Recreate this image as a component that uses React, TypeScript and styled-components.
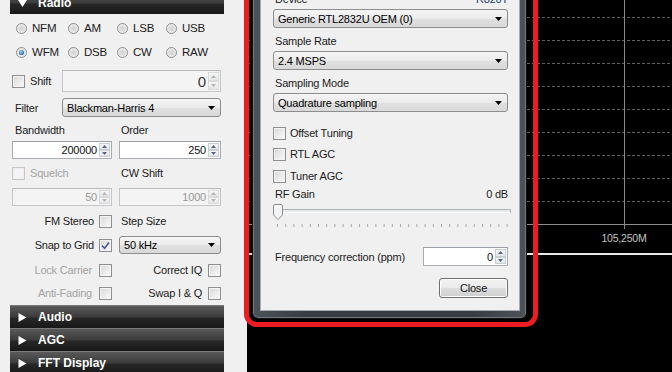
import styled, { createGlobalStyle } from 'styled-components';

const GlobalStyle = createGlobalStyle`
  html, body {
    margin: 0;
    padding: 0;
    background: #000;
    overflow: hidden;
  }
  body {
    font-family: 'Liberation Sans', Arial, sans-serif;
    font-size: 11px;
    letter-spacing: -0.2px;
    color: #1b1b1b;
  }
  * {
    box-sizing: border-box;
  }
`;

// ---------- small win32-ish controls ----------

function CheckBox({ checked, disabled }: { checked?: boolean; disabled?: boolean }) {
  return (
    <CheckBoxBox $disabled={disabled}>
      {checked && (
        <svg width="9" height="9" viewBox="0 0 9 9">
          <path d="M1 4.6 L3.6 7.2 L8 1.4" fill="none" stroke="#4a5d9a" strokeWidth="1.6" />
        </svg>
      )}
    </CheckBoxBox>
  );
}

function Radio({ label, checked }: { label: string; checked?: boolean }) {
  return (
    <RadioOption>
      <RadioCircle $checked={checked} />
      <span>{label}</span>
    </RadioOption>
  );
}

function Arrow({ up, disabled }: { up?: boolean; disabled?: boolean }) {
  return (
    <svg width="5" height="3" viewBox="0 0 5 3">
      <path d={up ? 'M0 3 L2.5 0 L5 3 Z' : 'M0 0 L5 0 L2.5 3 Z'} fill={disabled ? '#b4b4b4' : '#51648c'} />
    </svg>
  );
}

interface NumProps {
  value: string;
  disabled?: boolean;
  dim?: boolean;
  width?: number;
  big?: boolean;
}

function NumInput({ value, disabled, dim, width, big }: NumProps) {
  return (
    <NumBox $disabled={disabled} $w={width}>
      <NumValue $dim={dim} $big={big}>{value}</NumValue>
      <Spinner>
        <SpinButton $disabled={disabled}>
          <Arrow up disabled={disabled} />
        </SpinButton>
        <SpinButton $disabled={disabled}>
          <Arrow disabled={disabled} />
        </SpinButton>
      </Spinner>
    </NumBox>
  );
}

function Combo({ text }: { text: string }) {
  return (
    <ComboBox>
      <span>{text}</span>
      <svg width="7" height="4" viewBox="0 0 7 4">
        <path d="M0 0 H7 L3.5 4 Z" fill="#000" />
      </svg>
    </ComboBox>
  );
}

function Section({ title, open, first }: { title: string; open?: boolean; first?: boolean }) {
  return (
    <SectionBar $first={first}>
      <svg width="9" height="9" viewBox="0 0 9 9">
        <path d={open ? 'M0 1 H9 L4.5 8 Z' : 'M0.5 0 L8.5 4.5 L0.5 9 Z'} fill="#fff" />
      </svg>
      <span>{title}</span>
    </SectionBar>
  );
}

function GainSlider() {
  const ticks = Array.from({ length: 29 }, (_, i) => 4.5 + i * 8.2);
  return (
    <svg width="238" height="28" viewBox="0 0 238 28">
      <rect x="0.5" y="7.5" width="237" height="3" fill="#e7eaea" stroke="#b0b3b6" />
      <line x1="1" x2="237" y1="10.5" y2="10.5" stroke="#fff" />
      <path
        d="M0.5 4 Q0.5 2.5 2 2.5 H8 Q9.5 2.5 9.5 4 V13 L5 17.5 L0.5 13 Z"
        fill="#f3f3f3"
        stroke="#8b8f93"
      />
      <path d="M1.5 4.5 H8.5" stroke="#fff" />
      {ticks.map(x => (
        <line key={x} x1={x} x2={x} y1="22" y2="25" stroke="#a9a9a9" />
      ))}
    </svg>
  );
}

function SpectrumGrid() {
  const rows = Array.from({ length: 9 }, (_, i) => 17.5 + i * 23);
  return (
    <svg width="425" height="372" viewBox="0 0 425 372">
      {rows.map(y => (
        <line key={y} x1="0" x2="425" y1={y} y2={y} stroke="#5e5e5e" strokeDasharray="3 2" />
      ))}
      <line x1="0" x2="425" y1="224.5" y2="224.5" stroke="#8e8e8e" />
      <line x1="377.5" x2="377.5" y1="0" y2="229" stroke="#8a8a8a" />
      <text
        x="377"
        y="242"
        textAnchor="middle"
        fill="#c4c4c4"
        fontSize="10.5"
        fontFamily="'Liberation Sans', Arial, sans-serif"
      >
        105,250M
      </text>
      <line x1="0" x2="425" y1="254" y2="254" stroke="#e8e8e8" strokeWidth="2" />
    </svg>
  );
}

// ---------- page ----------

export default function App() {
  return (
    <>
      <GlobalStyle />
      <Root>
        <LeftPanel>
          <Section title="Radio" open first />
          <Form>
            <RadioGrid>
              <Radio label="NFM" />
              <Radio label="AM" />
              <Radio label="LSB" />
              <Radio label="USB" />
              <Radio label="WFM" checked />
              <Radio label="DSB" />
              <Radio label="CW" />
              <Radio label="RAW" />
            </RadioGrid>

            <WideRow $h={22} $mt={6}>
              <RowLabel>
                <CheckBox />
                <span>Shift</span>
              </RowLabel>
              <NumInput value="0" disabled big />
            </WideRow>

            <WideRow $h={19} $mt={6}>
              <RowLabel $indent={3}>Filter</RowLabel>
              <Combo text="Blackman-Harris 4" />
            </WideRow>

            <PairRow $h={14} $mt={6}>
              <Cell $pl={3}>Bandwidth</Cell>
              <Cell $pl={2}>Order</Cell>
            </PairRow>
            <PairRow $h={18} $mt={4}>
              <NumInput value="200000" />
              <NumInput value="250" />
            </PairRow>

            <PairRow $h={14} $mt={7}>
              <Cell $gap={5}>
                <CheckBox disabled />
                <Muted>Squelch</Muted>
              </Cell>
              <Cell $pl={2}>CW Shift</Cell>
            </PairRow>
            <PairRow $h={18} $mt={8}>
              <NumInput value="50" disabled dim />
              <NumInput value="1000" disabled dim />
            </PairRow>

            <PairRow $h={16} $mt={7}>
              <Cell $right $gap={5}>
                <span>FM Stereo</span>
                <CheckBox />
              </Cell>
              <Cell $pl={2}>Step Size</Cell>
            </PairRow>
            <PairRow $h={18} $mt={7}>
              <Cell $right $gap={5}>
                <span>Snap to Grid</span>
                <CheckBox checked />
              </Cell>
              <Combo text="50 kHz" />
            </PairRow>

            <PairRow $h={16} $mt={8}>
              <Cell $right $gap={7}>
                <Muted>Lock Carrier</Muted>
                <CheckBox />
              </Cell>
              <Cell $right $gap={6}>
                <span>Correct IQ</span>
                <CheckBox />
              </Cell>
            </PairRow>
            <PairRow $h={16} $mt={7}>
              <Cell $right $gap={7}>
                <Muted>Anti-Fading</Muted>
                <CheckBox />
              </Cell>
              <Cell $right $gap={6}>
                <span>Swap I &amp; Q</span>
                <CheckBox />
              </Cell>
            </PairRow>
          </Form>
          <SectionStack>
            <Section title="Audio" />
            <Section title="AGC" />
            <Section title="FFT Display" />
          </SectionStack>
        </LeftPanel>

        <Spectrum>
          <SpectrumGrid />
        </Spectrum>

        <DialogWindow>
          <DialogClient>
            <LabelRow>
              <span>Device</span>
              <TunerName>R820T</TunerName>
            </LabelRow>
            <DialogCombo $mt={3}>
              <Combo text="Generic RTL2832U OEM (0)" />
            </DialogCombo>
            <LabelRow $mt={6}>Sample Rate</LabelRow>
            <DialogCombo $mt={3}>
              <Combo text="2.4 MSPS" />
            </DialogCombo>
            <LabelRow $mt={6}>Sampling Mode</LabelRow>
            <DialogCombo $mt={3}>
              <Combo text="Quadrature sampling" />
            </DialogCombo>

            <CheckRow $mt={14}>
              <CheckBox />
              <span>Offset Tuning</span>
            </CheckRow>
            <CheckRow $mt={7}>
              <CheckBox />
              <span>RTL AGC</span>
            </CheckRow>
            <CheckRow $mt={8}>
              <CheckBox />
              <span>Tuner AGC</span>
            </CheckRow>

            <LabelRow $mt={4}>
              <span>RF Gain</span>
              <span>0 dB</span>
            </LabelRow>
            <SliderWrap>
              <GainSlider />
            </SliderWrap>

            <FreqRow>
              <span>Frequency correction (ppm)</span>
              <NumInput value="0" width={85} />
            </FreqRow>
            <CloseButton>Close</CloseButton>
          </DialogClient>
        </DialogWindow>

        <Highlight />
      </Root>
    </>
  );
}

// ðŸ’… styled-components
const Root = styled.div`
  position: relative;
  display: flex;
  width: 672px;
  height: 372px;
  overflow: hidden;
  background: #000;
`;

const LeftPanel = styled.aside`
  display: flex;
  flex-direction: column;
  flex: 0 0 247px;
  padding: 0 23px 0 10px;
  background: #f0f0f0;
`;

const SectionBar = styled.div<{ $first?: boolean }>`
  display: flex;
  align-items: center;
  gap: 11px;
  flex: 0 0 23px;
  height: 23px;
  margin-top: ${p => (p.$first ? '-9px' : '0')};
  padding-left: 8px;
  border-top: 1px solid #7a7a7a;
  background: linear-gradient(#5a5a5a, #3c3c3c 48%, #272727 56%, #181818);
  color: #fff;
  font-size: 12px;
  font-weight: bold;
  letter-spacing: 0;
`;

const SectionStack = styled.div`
  display: flex;
  flex-direction: column;
  margin-top: 4px;
`;

const Form = styled.div`
  display: flex;
  flex-direction: column;
  padding: 0 3px 0 2px;
`;

const RadioGrid = styled.div`
  display: grid;
  grid-template-columns: 52px 49px 49px 1fr;
  grid-auto-rows: 24px;
  align-items: center;
  margin-top: 2px;
  padding-left: 4px;
`;

const RadioOption = styled.label`
  display: flex;
  align-items: center;
  gap: 5px;
  font-size: 11.5px;
`;

const RadioCircle = styled.span<{ $checked?: boolean }>`
  display: flex;
  align-items: center;
  justify-content: center;
  width: 11px;
  height: 11px;
  border: 1px solid #8c8e90;
  border-radius: 50%;
  background: radial-gradient(circle at 50% 50%, #d6d6d6 20%, #f7f7f7 90%);

  &::after {
    content: '';
    display: ${p => (p.$checked ? 'block' : 'none')};
    width: 5px;
    height: 5px;
    border-radius: 50%;
    background: radial-gradient(circle at 40% 35%, #9ad6f7, #1c5f9b 80%);
  }
`;

const CheckBoxBox = styled.span<{ $disabled?: boolean }>`
  display: inline-flex;
  align-items: center;
  justify-content: center;
  flex: 0 0 13px;
  width: 13px;
  height: 13px;
  border: 1px solid ${p => (p.$disabled ? '#c7c7c7' : '#8e8f90')};
  background: ${p => (p.$disabled ? '#f4f4f4' : 'linear-gradient(135deg, #d8d8d8, #fbfbfb)')};
  box-shadow: inset 0 0 0 1px ${p => (p.$disabled ? '#eeeeee' : '#f3f3f3')};
`;

const WideRow = styled.div<{ $h: number; $mt: number }>`
  display: flex;
  align-items: center;
  height: ${p => p.$h}px;
  margin-top: ${p => p.$mt}px;
`;

const RowLabel = styled.div<{ $indent?: number }>`
  display: flex;
  align-items: center;
  gap: 5px;
  flex: 0 0 50px;
  padding-left: ${p => p.$indent ?? 0}px;
`;

const PairRow = styled.div<{ $h: number; $mt: number }>`
  display: grid;
  grid-template-columns: 100px 102px;
  column-gap: 7px;
  height: ${p => p.$h}px;
  margin-top: ${p => p.$mt}px;
`;

const Cell = styled.div<{ $pl?: number; $right?: boolean; $gap?: number }>`
  display: flex;
  align-items: center;
  justify-content: ${p => (p.$right ? 'flex-end' : 'flex-start')};
  gap: ${p => p.$gap ?? 0}px;
  padding-left: ${p => p.$pl ?? 0}px;
  white-space: nowrap;
`;

const Muted = styled.span`
  color: #a3a3a3;
`;

const NumBox = styled.div<{ $disabled?: boolean; $w?: number }>`
  display: flex;
  align-items: stretch;
  height: 100%;
  ${p => (p.$w ? `flex: 0 0 ${p.$w}px; width: ${p.$w}px;` : 'flex: 1;')}
  padding: 1px;
  border: 1px solid ${p => (p.$disabled ? '#c4c6c8' : '#a9adb3')};
  border-top-color: ${p => (p.$disabled ? '#b8babc' : '#9ba0a6')};
  background: ${p => (p.$disabled ? '#f4f4f4' : '#fff')};
`;

const NumValue = styled.div<{ $dim?: boolean; $big?: boolean }>`
  display: flex;
  align-items: center;
  justify-content: flex-end;
  flex: 1;
  padding-right: 2px;
  color: ${p => (p.$dim ? '#979797' : p.$big ? '#3a3a3a' : '#111')};
  font-size: ${p => (p.$big ? '15px' : '11px')};
`;

const Spinner = styled.div`
  display: flex;
  flex-direction: column;
  flex: 0 0 11px;
`;

const SpinButton = styled.div<{ $disabled?: boolean }>`
  display: flex;
  align-items: center;
  justify-content: center;
  flex: 1;
  border: 1px solid ${p => (p.$disabled ? '#dadada' : '#c9ced4')};
  background: linear-gradient(#f7f7f7, #e3e5e8);
`;

const ComboBox = styled.div`
  display: flex;
  align-items: center;
  justify-content: space-between;
  flex: 1;
  width: 100%;
  height: 100%;
  padding: 0 5px 0 4px;
  border: 1px solid #8d8d8d;
  border-radius: 3px;
  background: linear-gradient(#f5f5f5, #ebebeb 50%, #e0e0e0 52%, #d9d9d9);
  color: #000;
  white-space: nowrap;
`;

const Spectrum = styled.main`
  position: relative;
  flex: 1;
  background: #000;

  svg {
    display: block;
  }
`;

const DialogWindow = styled.section`
  position: absolute;
  left: 252px;
  top: -20px;
  width: 275px;
  padding: 0 6px 7px 7px;
  border: 1px solid #101315;
  border-top: 0;
  border-radius: 0 0 6px 6px;
  background: linear-gradient(90deg, #4c5359, #363c41 20%, #363c41 80%, #4c5359);
  box-shadow: inset 0 0 0 1px #6f767c;
`;

const DialogClient = styled.div`
  display: flex;
  flex-direction: column;
  padding: 12px 11px 12px 12px;
  border: 1px solid #a6acb1;
  border-top: 0;
  background: #f0f0f0;
`;

const LabelRow = styled.div<{ $mt?: number }>`
  display: flex;
  align-items: center;
  justify-content: space-between;
  height: 14px;
  margin-top: ${p => p.$mt ?? 0}px;
  padding-left: 2px;
`;

const TunerName = styled.span`
  color: #1f3d6e;
`;

const DialogCombo = styled.div<{ $mt: number }>`
  display: flex;
  height: 19px;
  margin-top: ${p => p.$mt}px;
`;

const CheckRow = styled.div<{ $mt: number }>`
  display: flex;
  align-items: center;
  gap: 4px;
  height: 14px;
  margin-top: ${p => p.$mt}px;
`;

const SliderWrap = styled.div`
  height: 28px;
  margin-top: 1px;

  svg {
    display: block;
  }
`;

const FreqRow = styled.div`
  display: flex;
  align-items: center;
  justify-content: space-between;
  height: 19px;
  margin-top: 17px;
  padding-left: 2px;
`;

const CloseButton = styled.button`
  align-self: flex-end;
  width: 69px;
  height: 20px;
  margin-top: 12px;
  padding: 0;
  border: 1px solid #707070;
  border-radius: 3px;
  background: linear-gradient(#f2f2f2, #ebebeb 50%, #dddddd 52%, #cfcfcf);
  box-shadow: inset 0 0 0 1px #fcfcfc;
  font-family: inherit;
  font-size: 11px;
  letter-spacing: -0.2px;
  color: #111;
`;

const Highlight = styled.div`
  position: absolute;
  left: 244px;
  top: -20px;
  width: 294px;
  height: 347px;
  border: 5px solid #ec1c24;
  border-top: 0;
  border-radius: 0 0 13px 13px;
  pointer-events: none;
`;
